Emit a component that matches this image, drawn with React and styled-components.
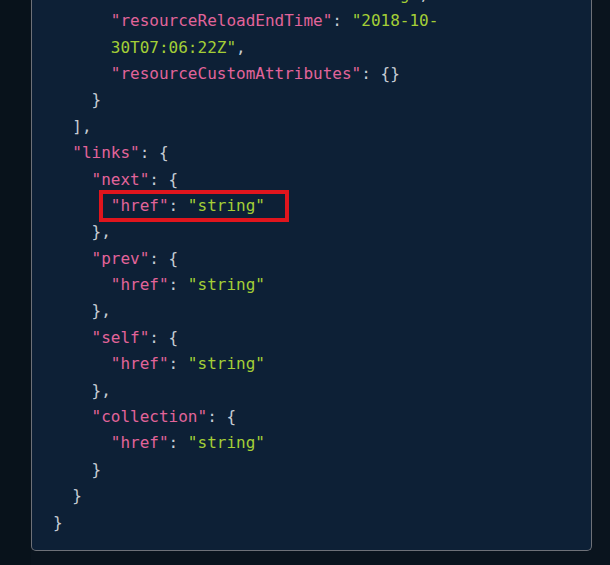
import React from 'react';
import styled, {createGlobalStyle} from 'styled-components';

const GlobalStyle = createGlobalStyle`
  html, body {
    margin: 0;
    padding: 0;
    background: #0a141e;
  }
`;

// Page and card //
const Page = styled.div`
  height: 565px;
  box-sizing: border-box;
  padding: 0 18px 14px 31px;
  display: flex;
  flex-direction: column;
  justify-content: flex-end;
  overflow: hidden;
  background: linear-gradient(to right, #08121b 31px, #0a141e 31px);
`;

const Card = styled.div`
  flex-shrink: 0;
  background: #0d2036;
  border: 1px solid #6e7178;
  border-top: none;
  border-radius: 0 0 5px 5px;
  padding: 12px 21px 14px 21px;
`;

const Code = styled.pre`
  margin: 0;
  font-family: "DejaVu Sans Mono", "Liberation Mono", monospace;
  font-size: 16px;
  line-height: 26.4px;
  color: #c6ccd4;
  white-space: pre;
`;

const Line = styled.div`
  padding-left: ${(p) => p.$level * 2}ch;
  height: 26.4px;
`;
// //////////////////////////////////////////////////

// Tokens //
const Key = styled.span`
  color: #e2649a;
`;

const Str = styled.span`
  color: #a4cf36;
`;

const Punct = styled.span`
  color: #c6ccd4;
`;

const Highlight = styled.span`
  position: relative;
  display: inline-block;

  &::after {
    content: '';
    position: absolute;
    top: -3px;
    bottom: -3px;
    left: -12px;
    right: -24px;
    border: 4px solid #e0151d;
  }
`;
// //////////////////////////////////////////////////

const LINES = [
  {level: 3, tokens: [['k', '"resourceReloadStatus"'], ['p', ': '], ['s', '"string"'], ['p', ',']]},
  {level: 3, tokens: [['k', '"resourceReloadEndTime"'], ['p', ': '], ['s', '"2018-10-']]},
  {level: 3, tokens: [['s', '30T07:06:22Z"'], ['p', ',']]},
  {level: 3, tokens: [['k', '"resourceCustomAttributes"'], ['p', ': {}']]},
  {level: 2, tokens: [['p', '}']]},
  {level: 1, tokens: [['p', '],']]},
  {level: 1, tokens: [['k', '"links"'], ['p', ': {']]},
  {level: 2, tokens: [['k', '"next"'], ['p', ': {']]},
  {level: 3, mark: true, tokens: [['k', '"href"'], ['p', ': '], ['s', '"string"']]},
  {level: 2, tokens: [['p', '},']]},
  {level: 2, tokens: [['k', '"prev"'], ['p', ': {']]},
  {level: 3, tokens: [['k', '"href"'], ['p', ': '], ['s', '"string"']]},
  {level: 2, tokens: [['p', '},']]},
  {level: 2, tokens: [['k', '"self"'], ['p', ': {']]},
  {level: 3, tokens: [['k', '"href"'], ['p', ': '], ['s', '"string"']]},
  {level: 2, tokens: [['p', '},']]},
  {level: 2, tokens: [['k', '"collection"'], ['p', ': {']]},
  {level: 3, tokens: [['k', '"href"'], ['p', ': '], ['s', '"string"']]},
  {level: 2, tokens: [['p', '}']]},
  {level: 1, tokens: [['p', '}']]},
  {level: 0, tokens: [['p', '}']]},
];

function renderTokens(tokens) {
  return tokens.map(([type, text], ind) => {
    if (type === 'k') return <Key key={ind}>{text}</Key>;
    if (type === 's') return <Str key={ind}>{text}</Str>;
    return <Punct key={ind}>{text}</Punct>;
  });
}

export default function App() {
  return (
    <>
      <GlobalStyle />
      <Page>
        <Card>
          <Code>
            {LINES.map((line, ind) => (
              <Line key={ind} $level={line.level}>
                {line.mark ?
                  <Highlight>{renderTokens(line.tokens)}</Highlight> :
                  renderTokens(line.tokens)}
              </Line>
            ))}
          </Code>
        </Card>
      </Page>
    </>
  );
}
